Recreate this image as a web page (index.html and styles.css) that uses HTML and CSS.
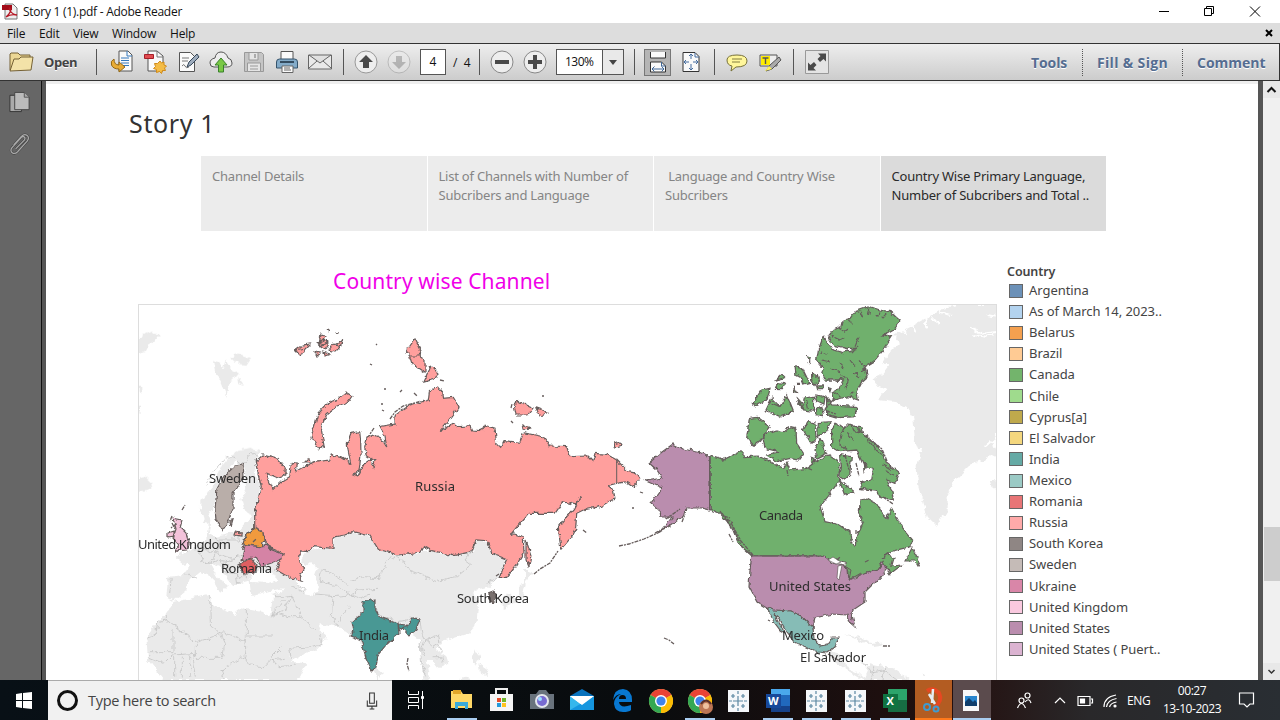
FILE: index.html
```html
<!DOCTYPE html>
<html lang="en">
<head>
<meta charset="utf-8">
<title>Story 1 (1).pdf - Adobe Reader</title>
<link rel="stylesheet" href="styles.css">
</head>
<body>
<header class="titlebar">
  <svg class="app-icon" viewBox="0 0 17 17"><path d="M3 1h8l4 4v11H3z" fill="#eee" stroke="#777"/><path d="M0 2h10v5H0z" fill="#a20b18"/><path d="M4 14c4-3 6-8 4-9s0 6 7 7c-4-1-8 0-11 2" fill="none" stroke="#b51724" stroke-width="1.3"/></svg>
  <span class="app-title">Story 1 (1).pdf - Adobe Reader</span>
  <svg class="win-controls" viewBox="0 0 110 22" fill="none" stroke="#000"><path d="M4 10.5h10M49.500 7.500h7v7h-7zM51.500 7v-1.500h7v7h-2M95 5.500l10 10M105 5.500l-10 10"/></svg>
</header>
<nav class="menubar"><span class="m1">File</span><span class="m2">Edit</span><span class="m3">View</span><span class="m4">Window</span><span class="m5">Help</span><svg class="doc-close" viewBox="0 0 8 8"><path d="M1 1l6 6M7 1L1 7" stroke="#000" stroke-width="2"/></svg></nav>
<div class="toolbar">
  <svg class="folder" viewBox="0 0 26 22"><path d="M1 19V3l1-1h7l2 2h10v4" fill="#ecd795" stroke="#756135"/><path d="M1 20L5 8h5l2-2h12l-2 13z" fill="#f3e2a8" stroke="#756135"/></svg>
  <span class="open">Open</span><i class="sep"></i>
  <div class="icons files">
    <svg viewBox="0 0 24 24"><path d="M9 1h9l4 4v16H9z" fill="#fafafa" stroke="#555"/><path d="M17 1v5h5M11 8h8M11 10.500h8M11 13h8M13 15.500h6" fill="none" stroke="#3479bd"/><path d="M4 9q-4 2-2.500 6t7.500 4v3l6-5-6-5v3q-5 0-5-6z" fill="#e8ac36" stroke="#936817"/></svg>
    <svg viewBox="0 0 24 24"><path d="M5 1h9l6 5v15H5z" fill="#fafafa" stroke="#555"/><path d="M14 1v6h6" fill="none" stroke="#777"/><path d="M1.500 4.500h9v4h-9z" fill="#e14c50" stroke="#a51f29"/><path d="M17 11l1.500 2 2.500-1 0 3 2.500 1-2 2 1 2.500-3 0-1 3-2-2-3 1 0-3-3-1 2-2-1-3 3 0z" fill="#f4bc45" stroke="#d18b19"/></svg>
    <svg viewBox="0 0 24 24"><path d="M3.500 2.500h11l4 4v15h-15z" fill="#fafafa" stroke="#555"/><path d="M6 8h7M6 11h6M6 16q2-3 3 0t4 1" fill="none" stroke="#777"/><path d="M11 17l2-5 8-8 2 3-8 8z" fill="#9eacbd" stroke="#354759"/></svg>
    <svg viewBox="0 0 24 24"><path d="M5 17q-4 0-4-4t5-5q1-6 6-6t7 6q4 1 4 5t-5 4z" fill="#ededed" stroke="#555"/><path d="M12 8l6 7h-3.500v7h-5v-7H6z" fill="#79c845" stroke="#39812b"/></svg>
    <svg viewBox="0 0 24 24"><path d="M2.500 2.500h17l2 2v17h-19z" fill="#c5c5c5" stroke="#999"/><path d="M7 3v7h9V3M5.500 13h13v8.500h-13zM8 16h8M8 19h8" fill="#e5e5e5" stroke="#999"/><path d="M12 4h2v4h-2z" fill="#aaa"/></svg>
    <svg viewBox="0 0 24 24"><path d="M6 9V1.500h12V9" fill="#fafafa" stroke="#555"/><path d="M1.500 12q0-3 3-3h15q3 0 3 3v6h-21z" fill="#83abc9" stroke="#35536b"/><path d="M5 11h14v2H5z" fill="#344c60"/><path d="M7 16h11v6.500H7zM9 18h6M9 20h7" fill="#fafafa" stroke="#666"/></svg>
    <svg viewBox="0 0 24 24"><path d="M.5 5h23v14H.5zM1 5l11 8L23 5M1 18l8-7M23 18l-8-7" fill="#e9e9e9" stroke="#666"/></svg>
  </div><i class="sep"></i>
  <div class="icons arrows"><svg viewBox="0 0 24 24"><circle cx="12" cy="12" r="11" fill="#eee" stroke="#999"/><path d="M12 5l7 7h-4v6H9v-6H5z" fill="#4a4a4a"/></svg><svg class="faded" viewBox="0 0 24 24"><circle cx="12" cy="12" r="11" fill="#eee" stroke="#888"/><path d="M12 19l7-7h-4V6H9v6H5z" fill="#777"/></svg></div>
  <span class="page-no">4</span><span class="page-total">/&nbsp; 4</span><i class="sep"></i>
  <div class="icons zooms"><svg viewBox="0 0 24 24"><circle cx="12" cy="12" r="11" fill="#eee" stroke="#888"/><path d="M5 10h14v4H5z" fill="#4a4a4a"/></svg><svg viewBox="0 0 24 24"><circle cx="12" cy="12" r="11" fill="#eee" stroke="#888"/><path d="M5 10h5V5h4v5h5v4h-5v5h-4v-5H5z" fill="#4a4a4a"/></svg></div>
  <div class="combo"><span>130%</span><b><svg viewBox="0 0 8 5"><path d="M0 0h8L4 5z" fill="#444"/></svg></b></div><i class="sep"></i>
  <span class="pressed"><svg viewBox="0 0 24 24"><path d="M4.500 2v6h15V2M4.500 22v-10h11l4 4v6z" fill="#fafafa" stroke="#333"/><path d="M15.500 12v4h4M6 19h12M8.500 16.500L6 19l2.500 2.500M15.500 16.500L18 19l-2.500 2.500" fill="none" stroke="#3f6798"/></svg></span>
  <svg class="fit" viewBox="0 0 24 24"><path d="M4 2.500h12l4 4v15H4z" fill="#f9f9f9" stroke="#333"/><path d="M16 3v4h4M12 4v5M12 14v6M5 12h5M14 12h5M10 6l2-2 2 2M10 18l2 2 2-2M7 10l-2 2 2 2M17 10l2 2-2 2" fill="none" stroke="#436b9e"/></svg><i class="sep"></i>
  <div class="icons notes"><svg viewBox="0 0 24 24"><path d="M7 16q-5-1-5-6t10-5 10 6-11 6l-5 4z" fill="#fff69b" stroke="#77713b"/><path d="M7 9h10M7 12h8" stroke="#827d40"/></svg><svg viewBox="0 0 24 24"><path d="M2 5h17v11H2z" fill="#eee" stroke="#555"/><path d="M3 6h9v9H3z" fill="#ffed00"/><path d="M4.500 8h6M7.500 8v6" stroke="#555" stroke-width="1.400"/><path d="M21 7l2 3-9 9-6 2 4-6z" fill="#aaa" stroke="#555"/><path d="M11 16l3 3-7 2z" fill="#fff35a"/></svg></div><i class="sep"></i>
  <svg class="expand" viewBox="0 0 24 24"><path d="M.5.5h23v23H.5z" fill="#e4e4e4" stroke="#999"/><path d="M13 3.500h8v8l-2.500-2.500-3.500 3-2.500-3 3-3zM3 12.500v8h8L8.500 18l3-3L9 12l-3.500 3z" fill="#4a4a4a"/></svg>
  <div class="tasks"><b>Tools</b><i></i><b class="fill">Fill &amp; Sign</b><i></i><b class="comment">Comment</b></div>
</div>
<main class="workspace">
  <aside class="sidebar"><svg viewBox="0 0 24 24"><path d="M2 5h12v17H2z" fill="#aaa" stroke="#333"/><path d="M7 2h10l5 5v13H7z" fill="#bbb" stroke="#444"/><path d="M17 2v5h5" fill="#aaa" stroke="#555"/></svg><svg viewBox="0 0 24 24"><path d="M8 16l9-9c2-3-1-5-3-3L4 15c-3 4 2 8 6 4L20 8c4-5-2-9-6-5L6 12" fill="none" stroke="#444" stroke-width="2.500"/><path d="M8 16l9-9c2-3-1-5-3-3L4 15c-3 4 2 8 6 4L20 8c4-5-2-9-6-5L6 12" fill="none" stroke="#aaa" stroke-width="1.300"/></svg></aside>
  <article class="page">
    <h1>Story 1</h1>
    <div class="story-tabs"><div>Channel Details</div><div>List of Channels with Number of<br>Subcribers and Language</div><div>&nbsp;Language and Country Wise<br>Subcribers</div><div class="active">Country Wise Primary Language,<br>Number of Subcribers and Total ..</div></div>
    <div class="dashboard">
      <section class="chart"><h2>Country wise Channel</h2>
      <svg class="map" viewBox="139 305 857 375">
        <defs>
          <filter id="coast" filterUnits="userSpaceOnUse" x="130" y="296" width="875" height="400" color-interpolation-filters="sRGB"><feTurbulence type="fractalNoise" baseFrequency=".18" numOctaves="3" seed="4"/><feDisplacementMap in="SourceGraphic" scale="5" xChannelSelector="R" yChannelSelector="G"/></filter>
          <filter id="soft" filterUnits="userSpaceOnUse" x="130" y="296" width="875" height="400" color-interpolation-filters="sRGB"><feTurbulence type="fractalNoise" baseFrequency=".14" numOctaves="3" seed="8"/><feDisplacementMap in="SourceGraphic" scale="7" xChannelSelector="R" yChannelSelector="G"/><feGaussianBlur stdDeviation=".35"/></filter>
        </defs>
        <g filter="url(#soft)"><g class="land">
          <g transform="translate(740 300) scale(.33333)"><path d="M570 48L610 25 650 15H810V370L765 400 760 440 770 460 730 480 690 495 645 540 620 590 620 630 590 680 560 650 535 560 530 500 540 470 525 430 520 350 500 320 460 305 415 300 425 282 440 270 415 260 400 240 430 220 445 200 430 185 450 150 480 130 460 105 520 75z"/><path d="M750 540h20v25h-15z"/><path class="fjords" d="M480 70l20 35M510 60l20 40M550 50l12 35M575 50l22 25M600 35l30 10M690 80l35 18 45-5M700 105l40 5 20-8M740 45l30 5M765 420l-25 20M530 450h18"/></g>
          <g transform="translate(138 300) scale(.33333)"><path d="M0 115L25 100 45 92 62 108 50 125 30 135 20 155 0 165zM228 183L245 190 258 205 265 178 275 205 300 220 287 235 275 245 265 290 255 265 235 220zM280 175L300 160 340 175 325 198 300 195zM298 230L318 258 300 252zM0 535L25 530 45 550 30 570 0 575zM2 260h8v18H2zM1 320h8v20H1z"/><path d="M190 600L210 575 235 540 250 500 275 470 300 450 340 443 365 455 350 485 355 530 370 560 365 600 350 650 320 635 310 600 325 570 315 500 290 482 265 530 240 590 215 640 190 630z"/></g>
          <g transform="translate(138 480) scale(.33333)"><path d="M185 80L210 95 220 120 215 165 235 170 300 155 350 100 365 150 430 200 480 290 460 320 340 345 335 305 300 315 285 315 265 290 245 260 215 250 245 300 270 315 245 340 220 290 185 275 155 300 145 330 105 362 85 350 90 290 140 285 150 260 115 230 165 205 205 180 215 130 195 125z"/><path d="M110 365L210 345 220 375 290 405 315 385 370 395 395 410 410 445 445 510 460 545 505 550 480 600H75L30 540 25 470 60 425 85 400z"/><path d="M395 345L430 335 460 295 500 340 530 345 490 240 510 210 580 200 590 170 650 155 720 180V620L690 500 650 475 600 440 550 430 540 450 570 470 535 510 460 540 430 490 395 415 405 350z"/></g>
          <g transform="translate(370 490) scale(.33333)"><path d="M0 140L75 195 150 187 180 185 260 197 305 185 318 150 355 155 370 190 410 210 390 260 355 290 310 300 325 330 320 395 300 430 215 455 200 480 230 500 235 520 205 535 185 510 170 510 180 560 165 590 150 450 120 430 90 400 30 450 0 540z"/><path d="M395 325L420 310 440 330 425 345 395 355zM445 325L450 285 465 280 465 240 490 250 475 260 460 325zM25 540l10 8-3 15-10-8zM315 475l13 25-10 25-10-20zM325 520l30 20-5 18-20-10zM250 585l40-30 10 15-35 30z"/></g>
          <g transform="translate(740 480) scale(.33333)"><path d="M262 515L305 525 315 560 350 575 370 595 390 550 460 565 510 600H370L320 570 280 540zM315 462l30 5 55 25-15 3-40-22zM390 490l25-6 15 12-35 5zM545 580l8 2-5 8z"/></g>
          </g>
          <path fill="#fff" d="M303 568l7-6 7 5-3 8 5 12-3 7-8-4-1-12zM250 574l10-4 12 2 5 8-10 3-16-1z"/>
          <g class="borders"><g transform="translate(138 480) scale(.33333)"><path d="M85 400L85 420 60 425 52 465 25 475M85 420L175 488 248 463 217 430 215 345M105 450V518H28M248 463L260 458 325 486V390M325 468H405M175 488V520L105 525 80 550 30 530M175 520L165 535 175 590M155 525V590M130 530V590M110 525V590M248 463L258 485 250 535 175 535M325 486L318 530 250 570 258 600M318 530L335 555 375 560 395 540 440 535M430 500L400 530 420 560 480 555M405 350L440 350 460 345 490 410 450 410 405 395M490 410L530 450M400 415L405 395 440 360M460 345L440 390 400 405M455 505L520 500 550 490 545 460M460 540L455 505M530 345L585 350 580 410 600 440M585 350L635 345 670 355 695 345M635 380L600 425M550 270L545 300 600 320 640 345 660 330 720 325M550 270L580 280 600 295 630 315M640 300L680 290 720 295M100 295L95 340M145 285L180 295M165 205L200 235 190 250 220 250M200 180L190 205 230 215M235 170L245 200 235 220 280 235 310 230M200 250L235 240 270 245 300 230M250 245L260 275 295 285M235 225L215 240M275 250L270 270 300 290 330 290M295 285L300 315M180 210L205 205M475 315L500 325 495 345M460 320L490 335M300 155L300 180 240 180"/></g>
          <g transform="translate(370 490) scale(.33333)"><path d="M75 195L100 215 110 238 200 272 260 260 305 225 285 210 305 185M75 200L45 218 30 260 0 270M0 350L35 380 80 395 140 385M150 390L155 430 165 450 205 435 210 455M165 450L155 480 165 500M170 450L190 470 205 460 220 490M185 500L215 500 220 520M350 280L385 265M150 450L155 520 170 560M80 395L90 415 130 400"/></g>
          <path d="M207 486Q210 474 220 464 230 450 239 462 247 465 248 456 256 450 258 458M861 660l10 12 12-2 14 10M875 665l-4 15M885 665l-2 15"/></g>
        </g>
        <g class="countries" filter="url(#coast)">
          <g fill="#ff9f9d">
          <path d="M255.300 461.700L263 455 278 459.300 285.300 468.300 284.700 475 276.300 477.700 266.300 473.300 269.700 481.700 273 489.300 281.300 481.700 289.700 476.700 291.300 463.300 297.300 464 296.300 471.700 304.700 466.700 314.700 462.300 329.700 460 331.300 455 341.300 457.300 350.700 463.300 348 450 347.300 443.300 351.300 433.300 359.700 431.700 360.700 441.700 361 455 359 471 353 474 358 476 364 464 371 459 373 467 375 461 366 455 364.700 446.700 367 438 374.700 435 381 438 386.700 447 385 437 379.300 426.700 395 424 395 415 410 405 428.300 400 429.300 391.700 436.700 386 441.700 391.700 442.700 398.300 453.300 397.300 459 406.700 451.700 416.700 439.300 431.700 453.300 423.300 458.300 426.700 470 426 471.700 430 481.700 430.700 484.300 425 495 428.300 496.700 443.300 500.700 447.300 504 440.700 520 442.300 523.300 432.700 543.300 436.700 550 446 566.700 446.700 570 456.700 588.300 456 592.700 461 595 453.300 606.700 454.300 616.700 460 628.300 471.700 636.700 473.300 640.700 478.300 633.300 486.700 626.700 481.700 617.300 483.300 608.300 485.700 613.300 490 615 498.300 600 506.700 583.300 510 576.700 513.300 575.700 528.300 571.700 536.700 561 549.300 558.300 526.700 563.300 520 573.300 510 580 497.300 576.700 505 563.300 501.700 555 513.300 528.300 513.300 511.700 533.300 523.300 536.700 524 553.300 516.700 565 506.700 577.300 499.300 577.300 501.700 570 506.700 559.300 491.700 553.300 487.300 540.700 476 540 471.700 551.700 453.300 555.700 431.700 550.700 423.300 546 420 552.300 398.300 555 378.300 549.300 370 536 353 531.700 344.700 535 333 537.300 333 548.300 313 546.700 308 551.700 300.300 551 299 563.300 304 568.300 299.700 575 302.300 581 288 576.700 276.300 570 283 553.300 271.300 548.300 264.700 540 263 531.700 254.700 528.300 254.700 513.300 258.700 496.700 261.300 486.700 258 473z"/>
          <path d="M311 438L318 414 328 403 340 398 347 393 352 396 348 402 337 406 327 414 321 427 324 446 319 449zM407 350L415 339 421 351 419 356 425 360 425 373 412 364 409 354zM408 356L419 356M424 382L431 366 438 373 435 379zM514 405L518 401 533 408 528 415 516 415zM536 408l11 4-7 4zM522 424l8 4-7 1zM614 444l6-2 2 3-7 2zM526 540l5 15-2 12-3-7zM235 532l7 1v3l-8-1z"/>
          <path d="M295 350l7-5 8-1-5 5-4 7zM318 344l6-6 5 5-4 6zM329 350l5-7 6 4-5 5zM336 344l5-2 2-3-3 8zM321 334l5 1-3 7-4 2zM315 352l6 1-4 3zM324 352l6 2-5 2zM335 332l4 1M327 330l2 2M304 463l5-5 1 5zM296 350l8-2M318 346l10-3M322 340l6 3"/>
          </g>
          <g fill="#70b06d" transform="translate(740 300) scale(.33333)">
          <path d="M265 108L280 90 305 80 310 60 330 55 345 35 390 20 420 30 450 35 480 62 465 85 430 105 458 108 430 150 400 185 375 200 382 230 365 245 350 275 355 300 325 290 280 300 275 280 300 265 310 240 260 240 245 220 250 205 230 180 235 150 250 110 265 130 275 148 310 158 350 145 320 145 280 135z"/><path d="M165 200l22 5 22 45-18 5-8-22-15-8zM215 220l25 18-15 18-10-15zM108 240l18-17 10 10zM107 265l10-17 17 3-7 15zM40 310L65 270 90 265 80 300 45 318zM78 330L95 295 120 320 140 285 160 335 120 350 100 340 85 338zM160 255l12 22-8-2zM202 170l9 3-3 12zM168 290l20 22 5-18 28-5v45l-35-5-10-20zM225 285l30 5-3 25-22-10zM230 325l15-5 5 27-20-3zM260 295l15 20 75 5-5 30-50 3-35-10zM230 258h20v8h-18zM266 260l8 2-4 12z"/><path d="M28 355L50 352 90 382 68 410 62 420 40 438 20 415zM68 405L110 390 130 395 150 380 168 385 170 430 190 460 175 480 150 475 110 485 80 465 115 455 75 445zM190 390l15-25 20 5 3 45-15 15zM235 368l38-3-20 35-20 10zM240 415l20 45-30 15-5-25zM213 475l13 3-8 18zM275 440L275 390 290 370 310 385 320 375 350 380 370 405 405 430 430 460 440 490 478 520 465 550 440 540 455 570 460 600 420 590 405 570 360 565 365 545 395 540 400 510 370 495 350 450 300 455zM335 378l30 2 5 17-28-5zM302 465l32 5-5 55-15 15-15-10 5-30zM298 540l45 35-30 8zM370 492l10 2-8 18zM165 380l5 15M170 250h10"/><path fill="none" stroke-width="3.500" d="M275 108l25 12 15-8M300 85l15 12 10-7M325 60l15 12M360 35l8 20M390 22l-5 22M420 35l-10 15M440 40l-15 15M345 140l12-30M430 105l20-20M370 195l-15-15M360 230l-20-12M275 205l25 10M245 180l25 6M240 155l20 8M290 245l18-12M330 180l15 20M300 190l12 18M285 280l20 10M330 285l12-12M300 220l25 20-10 25M380 205l-15 8M310 385l-10 45 20 20M325 400l15 20M385 420l15 20M400 435l10 20M412 455l18 15M430 495l25 15M440 515l22 10M370 405l18 8M95 310l25 10M175 300l15 30M200 300l5 25"/></g>
          <path fill="#70b06d" d="M710 456L722.700 460 740 451.700 745 456.700 758.300 456 773.300 463.300 783.300 468.300 787 463 790 470 806.700 468.300 818 460 828.300 455 840 463 838.300 481.700 830 494 820 506.700 825 521.700 840 525 850 531.700 851 542 855 546 858.300 533.300 862.700 523.300 859.300 513.300 860 500 867 499 876.700 504 881.700 513.300 886.700 518.300 891.700 508.300 901.700 526.700 912.700 540 910 546.700 890 551.700 881.700 558.300 888 554 894 558 891.700 566 901.700 565 890 574 885 566.700 883 561.700 878.300 569.300 866.700 571.700 850 580 848.300 570 843.300 561.700 828.300 558.300 820 556H751.700L738.300 543.300 731.700 526.700 720 513.300 710 509.300zM905 561l7-13 8 14-2 4-3-5z"/>
          <path fill="#ba8dae" d="M710 456L702 453 683 449 673 444 662 452 649 463 657 470 662 478 646 481 662 488 651 503 659 510 660 517 672 517 664 528 655 533 670 526 685 515 686 508 702 508 710 510zM751.700 556H820L828 558 833 563 843 565 848 570 849 580 867 572 878 569 883 562 886 570 879 580 873 584 865 592 865 602 853 610 852 615 855 627 849 622 847 615 832 614 815 618 813 627 800 615 790 611 773 610 765 607 757 602 749 587 750 570z"/>
          <path fill="#86bcb6" d="M767 607L773 610 790 611 800 615 813 627 814 638 820 646 827 645 832 638 839 638 835 647 827 653 817 652 795 642 787 632 775 612 777 620 785 633 780 630 774 622z"/>
          <path fill="#499894" d="M363 602L375 599 375 608 380 617 398 624 399 634 386 645 378 655 376 667 372 671 367 661 361 640 350 636 354 632 352 622 363 613zM398 625l8 1 8-8 6 1-4 10-7 6-4-5-6-2z"/>
          <path fill="#b9aea9" d="M236 465L243 464 244 476 239 485 233 494 233 508 229 520 222 530 216 520 215 509 217 489 224 476zM230 521l3-2-2 7z"/>
          <path fill="#f09a3e" d="M245 537L254 528 263 532 264 540 262 547 243 544z"/><path fill="#d583a5" d="M245 545L262 547 267 544 272 550 283 554 282 559 266 565 261 566 255 557 241 561z"/><path fill="#df5f61" d="M244 562L251 557 257 565 254 572 243 573 239 565z"/><path fill="#f3c2da" d="M173 518L182 520 180 527 186 533 190 545 186 550 174 551 179 545 173 538 176 529zM168 533l6-2v6l-6 1z"/><path fill="#79706e" d="M489 593l5-2 2 7-3 5-4-4z"/>
        </g>
        <g fill="#fff" stroke="#665d5c" stroke-width=".7"><path d="M828 560l5-3 8 5-5 2zM837 578l1-12 4-1-3 15zM849 579l11-4-5 3z"/></g>
        <path class="edge" d="M616.700 460V484M709.500 456V510M752 556H820M843 565l8 5-2 10 12-7"/>
        <path class="islets" d="M172 516l-2 5M176 524l-5 4M182 510l3-5M172 523l3 6M370 364l2 1M376 344l1 1M384 389h2M400 392l2-2M414 393l3 3M381 404h2M382 410l2 1M390 419l5-7 8-6 15-4M374 428l-4 6M440 380l4 1M511 408l1-4M511 421l2 2M542 396h2M640 492l3 1M534 574l6-5 10-6 8-12M583 530l4 3M632 508h2M619 546l10-2 15-5 18-8M664 638l5 2 5 4M666 519l14-10M682 522l3-8M729 534l4 8M408 658l-1 6 2 7M722 513l9 13M731 523l9 16M740 540l13 15M828 654l10 6M883 646h7M768 620l2 1M837 560l3-3M865 562l4-2M812 470l-7-3M870 440l12 9 5 12M883 497l10 7M845 455l4 15M856 463l3 13M856 530v5M833 400l-9 10 12 4M852 353l6-7M496 576l3-2M253 542l3-3M404 627l-5 4M720 511l15 22 7 14 11 9M724 516l6 2M727 519l6 4M787 470l1 6"/>
        <g class="labels"><text x="209" y="483" textLength="47">Sweden</text><text x="138" y="549" textLength="93">United Kingdom</text><text x="221" y="573" textLength="51">Romania</text><text x="415" y="491" textLength="40">Russia</text><text x="359" y="640" textLength="30">India</text><text x="457" y="603" textLength="72">South Korea</text><text x="759" y="520" textLength="44">Canada</text><text x="769" y="591" textLength="82">United States</text><text x="782" y="640" textLength="42">Mexico</text><text x="800" y="662" textLength="66">El Salvador</text></g>
      </svg></section>
      <aside class="legend"><h3>Country</h3><ul><li class="c1">Argentina<li class="c2">As of March 14, 2023..<li class="c3">Belarus<li class="c4">Brazil<li class="c5">Canada<li class="c6">Chile<li class="c7">Cyprus[a]<li class="c8">El Salvador<li class="c9">India<li class="c10">Mexico<li class="c11">Romania<li class="c12">Russia<li class="c13">South Korea<li class="c14">Sweden<li class="c15">Ukraine<li class="c16">United Kingdom<li class="c17">United States<li class="c18">United States ( Puert..</ul></aside>
    </div>
  </article>
  <div class="scrollbar"><svg viewBox="0 0 16 17"><path d="M4 11l4-4 4 4" fill="none" stroke="#111" stroke-width="2"/></svg><i class="thumb"></i><svg viewBox="0 0 16 17"><path d="M5 7l3 3 3-3" fill="none" stroke="#333" stroke-width="1.500"/></svg></div>
</main>
<footer class="taskbar">
  <svg class="start" viewBox="0 0 48 40"><path fill="#fff" d="M16 14l6-1v7h-6zM23 13l9-1v8h-9zM16 21h6v7l-6-1zM23 21h9v8l-9-1z"/></svg>
  <div class="search"><i></i><span>Type here to search</span><svg viewBox="0 0 16 22"><path d="M6 3h5v11H6zM3.500 11v6h10v-6M8.500 17v3M6 20h5" fill="none" stroke="#333" stroke-width="1.100"/></svg></div>
  <svg class="apps" viewBox="392 680 600 40">
    <defs><g id="chrome"><circle r="12" fill="#fdd663"/><path d="M0 0L-10.400-6A12 12 0 0 1 10.400-6z" fill="#ea4335"/><path d="M0 0L-10.400-6A12 12 0 0 0 0 12z" fill="#34a853"/><path d="M0 0L10.400-6A12 12 0 0 1 0 12z" fill="#fbbc04"/><circle r="6" fill="#fff"/><circle r="4.600" fill="#3f82ed"/></g><g id="tableau"><path d="M-10-11h21v22h-21z" fill="#f5f7fa"/><path d="M0-5V5M-5 0H5M0-10v3M0 7v3M-9 0h3M6 0h3M-5-7v4M-7-5h4M5-7v4M3-5h4M-5 3v4M-7 5h4M5 3v4M3 5h4" stroke="#5c87a2" stroke-width="1.200"/></g></defs>
    <path d="M915 680h37v40h-37z" fill="#b35c22"/><path d="M953 680h38v40h-38z" fill="#5b4b4d"/>
    <g fill="none" stroke="#fff"><path d="M408.500 691v3.500h10V691M408.500 709v-3.500h10v3.500M408.500 697.500h10v5h-10zM422.500 691v18"/><path d="M421.500 696.500h2v2h-2z" fill="#fff"/></g>
    <path d="M451 691h10l2 3h9v14h-21z" fill="#ffd867"/><path d="M453 690h8v4h-8z" fill="#e2a729"/><path d="M455 709v-7h13v7h-3v-3h-7v3z" fill="#39a9d9"/>
    <path d="M490 694h23v17h-23z" fill="#f5f5f5"/><path d="M496 694v-5h11v5" stroke="#eee" stroke-width="2" fill="none"/><path d="M497 698h4v4h-4z" fill="#e74d2a"/><path d="M502 698h4v4h-4z" fill="#70b72b"/><path d="M497 703h4v4h-4z" fill="#239bdb"/><path d="M502 703h4v4h-4z" fill="#ffc31d"/>
    <path d="M530 694h6l3-4h7l3 4h5v15h-24z" fill="#69737d"/><circle cx="542" cy="701" r="7" fill="#e5e7ee"/><circle cx="542" cy="701" r="5" fill="#776bd2"/><circle cx="540" cy="699" r="2" fill="#9ce0ff"/>
    <path d="M570 696l12-7 12 7v14h-24z" fill="#0872bd"/><path d="M570 696h24v14h-24z" fill="#35b7ec"/><path d="M570 696h24l-12 9z" fill="#fff"/><path d="M570 710l24-14v14z" fill="#1596df"/><path d="M570 696h24l-12 9z" fill="#fff"/>
    <path fill-rule="evenodd" d="M632 702H619q1 7 12 3v5q-2 2-8 2-8 0-9-8 0-7 7-10-5 0-8 6 1-11 10-11 9 1 9 11zM619 699h7q0-4-3.500-4t-3.500 4z" fill="#0878d1"/>
    <use href="#chrome" x="661" y="701"/><use href="#chrome" x="700" y="701"/><circle cx="706" cy="707" r="7" fill="#bd7655"/><circle cx="706" cy="706" r="3" fill="#efc09f"/><path d="M701 704q5-7 10 0" stroke="#5b302a" stroke-width="2" fill="none"/>
    <use href="#tableau" x="738" y="701"/><use href="#tableau" x="816" y="701"/><use href="#tableau" x="855" y="701"/>
    <path d="M771 689h19v23h-19z" fill="#2169bd"/><path d="M771 689h19v6h-19z" fill="#4aa8ec"/><path d="M771 706h19v6h-19z" fill="#16428a"/><path d="M766 694h15v14h-15z" fill="#17499a"/><text x="768" y="705" class="wordmark">W</text>
    <path d="M888 689h19v23h-19z" fill="#2ca56b"/><path d="M888 700h19v12h-19z" fill="#176d43"/><path d="M883 694h15v14h-15z" fill="#107341"/><text x="886.500" y="705" class="wordmark">X</text>
    <path d="M927 691q6-4 12 2 4 8-5 15" stroke="#e64821" stroke-width="4" fill="none"/><path d="M933 689l-1 14M929 694l6 10" stroke="#e5edf2" stroke-width="2.500"/><circle cx="927" cy="707" r="3" fill="none" stroke="#409bd0" stroke-width="2"/><circle cx="936" cy="709" r="2.500" fill="none" stroke="#409bd0" stroke-width="2"/>
    <path d="M963 690h13l3 4v17h-16z" fill="#f8f8f8"/><path d="M965 696h12v10h-12z" fill="#2986ce"/><path d="M965 706v-4l4-4 4 4 2-2 2 3v3z" fill="#103e6b"/>
    <path fill="#a9cdf0" d="M447 718h30v2h-30zM685 718h30v2h-30zM763 718h30v2h-30zM802 718h30v2h-30zM841 718h30v2h-30zM880 718h30v2h-30zM953 718h38v2h-38z"/><path fill="#ff791b" d="M915 718h37v2h-37z"/>
  </svg>
  <svg class="tray-icons" viewBox="1010 680 110 40" fill="none" stroke="#fff" stroke-width="1.200"><circle cx="1021.500" cy="700.500" r="2.500"/><path d="M1017.500 708q4-9 8 0M1025 702q4-5 6 1"/><circle cx="1027.500" cy="695.500" r="2.500"/><path d="M1055 703l5-5 5 5"/><path d="M1078 696.500h12v9h-12zM1091 699h1.500v4h-1.500"/><path fill="#fff" d="M1080.500 699h4v4h-4z"/><path d="M1104 707q0-10 12-12M1106.500 707q1-7 10-8.500M1109.500 707q1-4 7-5"/><circle cx="1115" cy="706" r="1" fill="#fff"/></svg>
  <span class="language">ENG</span><div class="clock"><span>00:27</span><span>13-10-2023</span></div>
  <svg class="notice" viewBox="0 0 18 18"><path d="M1.500 2h14v11H12l-3 3-3-3H1.500z" fill="none" stroke="#fff" stroke-width="1.200"/></svg>
</footer>
</body>
</html>
```

FILE: styles.css
```css
* { box-sizing: border-box; }
body { margin: 0; width: 1280px; height: 720px; overflow: hidden; display: flex; flex-direction: column; background: #fff; color: #111; font: 12px "Open Sans", sans-serif; }
svg { display: block; flex-shrink: 0; }
.titlebar { height: 23px; display: flex; align-items: center; padding-left: 2px; }
.app-icon { width: 17px; height: 17px; }
.app-title { margin-left: 4px; letter-spacing: -.27px; white-space: nowrap; }
.win-controls { width: 110px; height: 22px; margin-left: auto; margin-right: 15px; }
.menubar { height: 20px; background: #ddd; display: flex; align-items: center; padding-left: 7px; letter-spacing: -.2px; }
.menubar span { white-space: nowrap; }
.m1 { width: 32px; } .m2 { width: 34px; } .m3 { width: 39px; } .m4 { width: 58px; }
.doc-close { width: 8px; height: 8px; margin: 0 7px 0 auto; }
.toolbar { height: 38px; border: 1px solid #333; border-width: 1px 1px 1px 0; background: linear-gradient(#eee, #ccc); display: flex; align-items: center; padding-left: 9px; }
.folder { width: 26px; height: 22px; }
.open { margin-left: 9px; width: 52px; font-size: 13px; font-weight: 700; color: #444; letter-spacing: -.4px; text-shadow: 0 1px #fff; }
.sep { width: 1px; height: 26px; background: #555; flex-shrink: 0; }
.icons { display: flex; gap: 9px; }
.icons svg { width: 24px; height: 24px; }
.files { margin: 0 11px 0 13px; }
.arrows { margin-left: 10px; }
.faded { opacity: .4; }
.page-no { width: 26px; height: 26px; background: #fff; border: 1px solid #555; margin-left: 9px; text-align: center; line-height: 24px; }
.page-total { width: 33px; padding-left: 7px; white-space: nowrap; }
.zooms { margin-left: 10px; }
.combo { margin: 0 10px 0 9px; width: 68px; height: 26px; display: flex; border: 1px solid #555; background: #fff; line-height: 24px; }
.combo span { width: 45px; padding-left: 8px; letter-spacing: -.5px; }
.combo b { flex: 1; border-left: 1px solid #555; background: #e9e9e9; display: grid; place-items: center; }
.combo svg { width: 8px; height: 5px; }
.pressed { width: 27px; height: 27px; margin-left: 9px; display: grid; place-items: center; background: #b5b5b5; border: 1px solid #777; }
.pressed svg { width: 24px; height: 24px; }
.fit { width: 24px; height: 24px; margin: 0 11px 0 8px; }
.notes { margin: 0 11px 0 10px; }
.expand { width: 24px; height: 24px; margin-left: 11px; }
.tasks { margin-left: auto; display: flex; align-items: center; padding-right: 12px; color: #556d91; font-size: 14px; text-shadow: 0 1px #fff; }
.tasks i { height: 27px; border-left: 1px dotted #555; margin: 0 14px; }
.tasks b { width: 37px; white-space: nowrap; letter-spacing: -.1px; }
.tasks .fill { width: 71px; letter-spacing: .33px; }
.tasks .comment { width: 70px; letter-spacing: 0; }
.workspace { height: 599px; display: flex; background: #555; }
.sidebar { width: 42px; background: #666; border-right: 1px solid #111; padding: 9px 8px; display: flex; flex-direction: column; gap: 19px; }
.sidebar svg { width: 23px; height: 24px; }
.page { margin-left: 4px; width: 1212px; background: #fff; padding: 0 0 0 83px; border-top: 3px solid #eee; overflow: hidden; }
h1 { margin: 21px 0 0; height: 51px; font: 25px/36px "Noto Sans", sans-serif; color: #333; letter-spacing: .65px; }
.story-tabs { margin-left: 72px; width: 905px; height: 75px; display: grid; grid-template-columns: repeat(4, 1fr); gap: 1px; font: 13px/19px "Noto Sans", sans-serif; color: #858585; }
.story-tabs div { background: #ececec; padding: 11px 0 0 11px; white-space: nowrap; letter-spacing: -.22px; }
.story-tabs .active { background: #dbdbdb; color: #2a2a2a; }
.dashboard { display: flex; margin-left: 9px; }
.chart { width: 859px; }
h2 { margin: 36px 0 0 195px; height: 37px; font: 400 21px/29px "Noto Sans", sans-serif; color: #f000e8; letter-spacing: .12px; white-space: nowrap; }
.map { width: 859px; height: 376px; border: 1px solid #ddd; border-bottom: 0; }
.land { fill: #eaeaea; }
.fjords { fill: none; stroke: #fff; stroke-width: 6; }
.borders { fill: none; stroke: #c0c0c0; stroke-width: .7; }
.borders g { stroke-width: 2.2; }
.countries { stroke: #665d5c; stroke-width: 1.2; }
.countries g[transform] { stroke-width: 3.8; }
.edge, .islets { stroke: #665d5c; stroke-width: 1; fill: none; }
.islets { stroke-width: 1.3; stroke-dasharray: 4 1 2 1; }
.labels { font: 13px "Noto Sans", sans-serif; fill: #2c2c2c; }
.legend { margin: 32px 0 0 9px; width: 158px; font: 13px "Noto Sans", sans-serif; color: #444; letter-spacing: -.05px; }
.legend h3 { margin: 0 0 0 1px; font: 600 12.5px/17px "Noto Sans", sans-serif; letter-spacing: -.1px; }
.legend ul { list-style: none; padding: 0; margin: 0 0 0 3px; }
.legend li { height: 21.12px; display: flex; align-items: center; white-space: nowrap; line-height: 21px; }
.legend li::before { content: ""; width: 14px; height: 14px; margin-right: 6px; border: 1px solid #666; background: var(--swatch); flex-shrink: 0; box-sizing: border-box; }
.c1 { --swatch: #6c91b8; } .c2 { --swatch: #b3d3ef; } .c3 { --swatch: #f4a04f; } .c4 { --swatch: #ffcb94; } .c5 { --swatch: #73b46c; } .c6 { --swatch: #9fdb8d; } .c7 { --swatch: #bfa94c; } .c8 { --swatch: #f4d77e; } .c9 { --swatch: #65aaa5; } .c10 { --swatch: #9bcac5; } .c11 { --swatch: #e87576; } .c12 { --swatch: #ffaaa9; } .c13 { --swatch: #8f8684; } .c14 { --swatch: #c5bbb7; } .c15 { --swatch: #d986a8; } .c16 { --swatch: #fac9df; } .c17 { --swatch: #ba8dae; } .c18 { --swatch: #dbb3d1; }
.scrollbar { margin-left: 5px; width: 17px; background: #f0f0f0; display: flex; flex-direction: column; }
.scrollbar svg { width: 17px; height: 17px; background: #e8e8e8; }
.thumb { height: 54px; margin: 429px 0 auto 1px; background: #cdcdcd; }
.taskbar { height: 40px; background: linear-gradient(90deg, #081016, #090c0e 50%, #24100f 75%, #29282a 85%, #292e33); display: flex; align-items: center; color: #fff; }
.start { width: 48px; height: 40px; }
.search { width: 344px; height: 40px; background: #f1f1f1; border-top: 1px solid #aaa; display: flex; align-items: center; color: #444; font-size: 14.5px; }
.search i { width: 21px; height: 21px; border: 3px solid #111; border-radius: 50%; margin-left: 9px; }
.search span { margin-left: 10px; letter-spacing: -.3px; white-space: nowrap; }
.search svg { width: 15px; height: 21px; margin: 0 13px 0 auto; }
.apps { width: 600px; height: 40px; }
.wordmark { font: 700 11px "Open Sans", sans-serif; fill: #fff; }
.tray-icons { width: 110px; height: 40px; margin-left: 18px; }
.language { margin-left: 7px; width: 34px; letter-spacing: -.4px; }
.clock { width: 62px; display: flex; flex-direction: column; align-items: center; line-height: 18px; letter-spacing: -.45px; white-space: nowrap; }
.notice { width: 18px; height: 18px; margin-left: 15px; }
```
